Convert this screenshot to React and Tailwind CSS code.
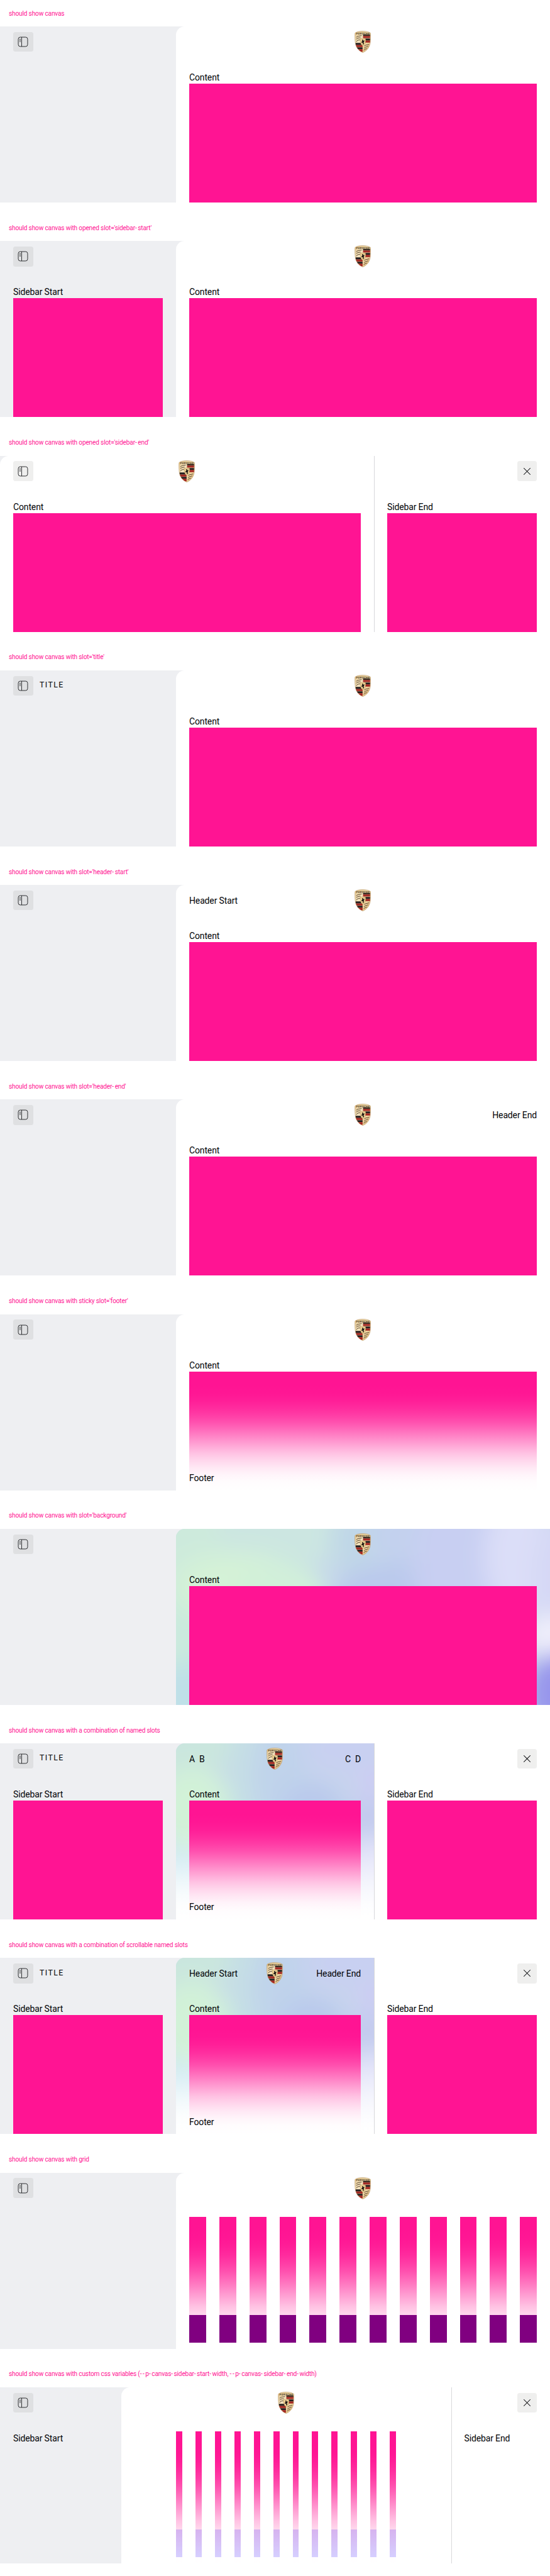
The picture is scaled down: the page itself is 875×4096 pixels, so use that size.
const BODY = "text-[14px] leading-[21px] tracking-[-0.01em]";

const SHIELD =
  "M1 4C4 1.600 9 .6 15 .6S26 1.600 29 4C29.400 9 29.300 15 28.700 21 27.900 29.500 22.500 36.500 15 39.500 7.500 36.500 2.100 29.500 1.300 21 .7 15 .6 9 1 4Z";

function Crest() {
  return (
    <svg viewBox="0 0 30 40" className="h-10 w-[26.25px]" aria-label="Crest">
      <defs>
        <clipPath id="shield">
          <path d={SHIELD} />
        </clipPath>
        <linearGradient id="gold" x1="0" y1="0" x2="1" y2="1">
          <stop offset="0" stopColor="#dfc08a" />
          <stop offset=".4" stopColor="#f6e6c2" />
          <stop offset=".7" stopColor="#ecd09a" />
          <stop offset="1" stopColor="#d0a468" />
        </linearGradient>
      </defs>
      <g clipPath="url(#shield)">
        <rect width="30" height="40" fill="url(#gold)" />
        <rect x="15.500" y="6.500" width="12.800" height="3" fill="#3a2a20" />
        <rect x="15.500" y="9.500" width="12.800" height="3.600" fill="#a32622" />
        <rect x="15.500" y="14" width="12.800" height="3.600" fill="#241f20" />
        <rect x="15.500" y="17.600" width="12.800" height="3.800" fill="#a32622" />
        <rect x="1.800" y="22" width="12.900" height="3.800" fill="#241f20" />
        <rect x="1.800" y="25.800" width="12.900" height="3.700" fill="#a32622" />
        <rect x="1.800" y="30" width="12.900" height="3.400" fill="#241f20" />
        <rect x="1.800" y="33.400" width="12.900" height="4.800" fill="#a32622" />
        <g fill="none" stroke="#4a3a28" strokeWidth="1.050" strokeLinecap="round">
          <path d="M3.500 11.500C6 9 9 9.800 12.500 8.800" />
          <path d="M3.500 15C5.500 12.800 8 13 10.500 12.600" />
          <path d="M3.500 19.400C5 16.800 7 17 9.500 16.400" />
          <path d="M18 27.500C20 25 23 26.200 26 24.800" />
          <path d="M17.500 31.500C19 28.800 22 29.800 24.500 28.400" />
          <path d="M17 35.300C18.200 32.600 20 33.500 22 32.400" />
        </g>
        <path d="M10.300 14.500C13 13.400 17.500 13.400 20.200 14.500 20.500 20 19.500 25 15.200 27.500 11 25 10 20 10.300 14.500Z" fill="#ecd094" stroke="#a87f42" strokeWidth=".5" />
        <path d="M13.500 16.600 15.200 15.700 16 18.200 17.900 16.800 17.600 19.600 16.500 21.300 17.200 23 15.800 25.300 15 23.800 15.400 22 13.700 21.400 12.500 22.400 13 19.800 14.300 18.700Z" fill="#1b1512" />
        <path d="M1 3.900C9 1.200 21 1.200 29 3.900V7C21 4.600 9 4.600 1 7Z" fill="#dcc08a" />
        <text x="15" y="6.300" textAnchor="middle" fontSize="4.200" fontWeight="700" fontFamily="Roboto, sans-serif" textLength="24" fill="#3a3222">
          PORSCHE
        </text>
      </g>
      <path d={SHIELD} fill="none" stroke="#b08a52" strokeWidth=".6" />
    </svg>
  );
}

function IconButton({ kind }) {
  return (
    <button className="flex size-9 shrink-0 items-center justify-center rounded-[3.5px] bg-[rgba(100,100,90,0.1)]">
      <svg viewBox="0 0 24 24" className="size-6" fill="none" stroke="#2a2b2e" strokeWidth="1.100">
        {kind === "close" ? (
          <path d="M6 6 18 18M18 6 6 18" strokeWidth="1.200" stroke="#010205" />
        ) : (
          <>
            <rect x="3.500" y="3.500" width="17" height="17" rx="3.600" />
            <path d="M9.700 3.500V20.500" />
            <path d="M5.600 7.200H8.100M5.600 9.400H8.100M5.600 11.600H8.100" strokeWidth="1" />
          </>
        )}
      </svg>
    </button>
  );
}

const WIDE = {
  base: "#c6d8ea",
  blobs: [
    [0, 0, 150, 90, "#cdeadc"], [200, 0, 130, 70, "#cce6e1"], [0, 330, 90, 150, "#bfe0e8"], [0, 170, 70, 80, "#cbeade"],
    [110, 105, 120, 62, "#d4f2d7"], [190, 115, 80, 50, "#d1f0d9"], [320, 20, 40, 60, "#c0d7e7"], [400, 120, 110, 60, "#bac9ec"],
    [430, 10, 80, 50, "#c3d1ee"], [510, 60, 80, 130, "#c8cff2"], [620, 50, 60, 110, "#dbdef8"], [690, 90, 40, 110, "#d5d8f5"],
    [680, 195, 50, 40, "#efeefb"], [695, 300, 60, 75, "#9795ec"],
  ],
};

const NARROW = {
  base: "#c8d6ec",
  blobs: [
    [0, 0, 120, 60, "#cae6de"], [0, 300, 80, 110, "#bfe2ee"], [30, 120, 75, 75, "#d2f2d8"], [130, 60, 36, 130, "#c5dee5"],
    [190, 60, 50, 100, "#c0d3eb"], [250, 130, 60, 60, "#b9c9ec"], [320, 10, 90, 50, "#c8d0f1"], [360, 75, 34, 35, "#cccdf3"],
    [350, 135, 30, 36, "#c3c9f0"], [360, 220, 40, 50, "#d9d9f8"], [360, 310, 60, 40, "#c9c8f4"],
  ],
};

function Backdrop({ width, scene }) {
  return (
    <svg viewBox={`0 0 ${width} 320`} preserveAspectRatio="none" className="absolute inset-0 size-full">
      <defs>
        <filter id={`soft${width}`} x="-30%" y="-30%" width="160%" height="160%">
          <feGaussianBlur stdDeviation="20" />
        </filter>
      </defs>
      <rect width={width} height="320" fill={scene.base} />
      <g filter={`url(#soft${width})`}>
        <rect x="-80" y="-80" width={width + 160} height="480" fill={scene.base} />
        {scene.blobs.map(([x, y, rx, ry, color]) => (
          <ellipse key={`${x}-${y}`} cx={x} cy={y} rx={rx} ry={ry} fill={color} />
        ))}
      </g>
    </svg>
  );
}

function Block() {
  return <div className="flex-1 bg-[#ff1493]" />;
}

function Label({ children }) {
  return (
    <p className={`${BODY} h-6 shrink-0`}>
      <span className="relative top-px">{children}</span>
    </p>
  );
}

// Hyphens are given extra advance so that compound names read open at small size.
function Caption({ text }) {
  return (
    <h2 className="h-12 shrink-0 px-4 pt-[13.5px] text-[10.2px] leading-[16px] tracking-[-0.02em] whitespace-nowrap text-[#ff1493]">
      {text.split(/(-+)/).map((part, i) =>
        part.startsWith("-") ? (
          <span key={i} className="tracking-[0.15em]">
            {part}
          </span>
        ) : (
          part
        ),
      )}
    </h2>
  );
}

function Columns({ className }) {
  return (
    <div className="grid h-full grid-cols-12 gap-6">
      {Array.from({ length: 12 }, (_, i) => (
        <div key={i} className={className} />
      ))}
    </div>
  );
}

function Footer({ className = "h-48 px-6", children }) {
  return (
    <div
      className={`${className} absolute inset-x-0 bottom-0 flex flex-col justify-end bg-[linear-gradient(to_top,rgba(255,255,255,1)_0%,rgba(255,255,255,.987)_8.1%,rgba(255,255,255,.951)_15.5%,rgba(255,255,255,.896)_22.5%,rgba(255,255,255,.825)_29%,rgba(255,255,255,.741)_35.3%,rgba(255,255,255,.648)_41.2%,rgba(255,255,255,.55)_47.1%,rgba(255,255,255,.45)_52.9%,rgba(255,255,255,.352)_58.8%,rgba(255,255,255,.259)_64.7%,rgba(255,255,255,.175)_71%,rgba(255,255,255,.104)_77.5%,rgba(255,255,255,.049)_84.5%,rgba(255,255,255,.013)_91.9%,rgba(255,255,255,0)_100%)] pb-[9.6px]`}
    >
      {children}
    </div>
  );
}

function Canvas({ caption, title, start, startWidth = "w-80", startOpen = true, end, endWidth = "w-80", headerStart, headerEnd, backdrop, footer, bodyInset = "px-6", children }) {
  return (
    <section className="flex h-[341.25px] flex-col">
      <Caption text={caption} />
      <div className="flex h-80 overflow-hidden bg-[#eeeff2]">
        {startOpen && (
          <aside className={`${startWidth} flex shrink-0 flex-col px-6`}>
            <div className="flex h-14 shrink-0 items-center gap-3">
              <IconButton />
              {title && <span className="relative -top-px text-[12.4px] leading-none tracking-[0.115em]">{title}</span>}
            </div>
            <div className="flex flex-1 flex-col pt-6">{start}</div>
          </aside>
        )}
        <main className="relative flex min-w-0 flex-1 flex-col overflow-hidden rounded-tl-[14px] bg-white">
          {backdrop}
          <header className={`${BODY} relative grid h-14 shrink-0 grid-cols-[1fr_auto_1fr] items-center px-6`}>
            <div>{startOpen ? <div className="pt-px">{headerStart}</div> : <IconButton />}</div>
            <Crest />
            <div className="pt-px text-right">{headerEnd}</div>
          </header>
          <div className={`${bodyInset} relative flex flex-1 flex-col pt-6`}>{children}</div>
          {footer}
        </main>
        {end && (
          <aside className={`${endWidth} flex shrink-0 flex-col border-l border-[#d8d8db] bg-white pr-6 pl-[20px]`}>
            <div className="flex h-14 shrink-0 items-center justify-end">
              <IconButton kind="close" />
            </div>
            <div className="flex flex-1 flex-col pt-6">{end}</div>
          </aside>
        )}
      </div>
    </section>
  );
}

const content = (
  <>
    <Label>Content</Label>
    <Block />
  </>
);

const sidebarStart = (
  <>
    <Label>Sidebar Start</Label>
    <Block />
  </>
);

const sidebarEnd = (
  <>
    <Label>Sidebar End</Label>
    <Block />
  </>
);

const textFooter = (
  <Footer>
    <Label>Footer</Label>
  </Footer>
);

export default function App() {
  return (
    <div className="w-[875px] bg-white font-[Roboto,sans-serif] text-[#010205] [--spacing:3.5px]">
      <Canvas caption="should show canvas">{content}</Canvas>
      <Canvas caption="should show canvas with opened slot='sidebar-start'" start={sidebarStart}>
        {content}
      </Canvas>
      <Canvas caption="should show canvas with opened slot='sidebar-end'" startOpen={false} end={sidebarEnd}>
        {content}
      </Canvas>
      <Canvas caption="should show canvas with slot='title'" title="TITLE">
        {content}
      </Canvas>
      <Canvas caption="should show canvas with slot='header-start'" headerStart="Header Start">
        {content}
      </Canvas>
      <Canvas caption="should show canvas with slot='header-end'" headerEnd="Header End">
        {content}
      </Canvas>
      <Canvas caption="should show canvas with sticky slot='footer'" footer={textFooter}>
        {content}
      </Canvas>
      <Canvas caption="should show canvas with slot='background'" backdrop={<Backdrop width={680} scene={WIDE} />}>
        {content}
      </Canvas>
      <Canvas
        caption="should show canvas with a combination of named slots"
        title="TITLE"
        start={sidebarStart}
        end={sidebarEnd}
        headerStart={
          <div className="flex gap-2">
            <span>A</span>
            <span>B</span>
          </div>
        }
        headerEnd={
          <div className="flex justify-end gap-2">
            <span>C</span>
            <span>D</span>
          </div>
        }
        backdrop={<Backdrop width={360} scene={NARROW} />}
        footer={textFooter}
      >
        {content}
      </Canvas>
      <Canvas
        caption="should show canvas with a combination of scrollable named slots"
        title="TITLE"
        start={sidebarStart}
        end={sidebarEnd}
        headerStart="Header Start"
        headerEnd="Header End"
        backdrop={<Backdrop width={360} scene={NARROW} />}
        footer={textFooter}
      >
        {content}
      </Canvas>
      <Canvas
        caption="should show canvas with grid"
        footer={
          <Footer className="h-[190.75px] px-6">
            <div className="h-[43.75px]">
              <Columns className="bg-[#800080]" />
            </div>
          </Footer>
        }
      >
        <Columns className="bg-[#ff1493]" />
      </Canvas>
      <Canvas
        caption="should show canvas with custom css variables (--p-canvas-sidebar-start-width, --p-canvas-sidebar-end-width)"
        startWidth="w-55"
        start={<Label>Sidebar Start</Label>}
        endWidth="w-45"
        end={<Label>Sidebar End</Label>}
        bodyInset="px-25"
        footer={
          <Footer className="h-[190.75px] px-25">
            <div className="h-[43.75px]">
              <Columns className="bg-linear-to-b from-[#d6b3ef] to-[#d6cfff]" />
            </div>
          </Footer>
        }
      >
        <Columns className="bg-[#ff1493]" />
      </Canvas>
    </div>
  );
}
